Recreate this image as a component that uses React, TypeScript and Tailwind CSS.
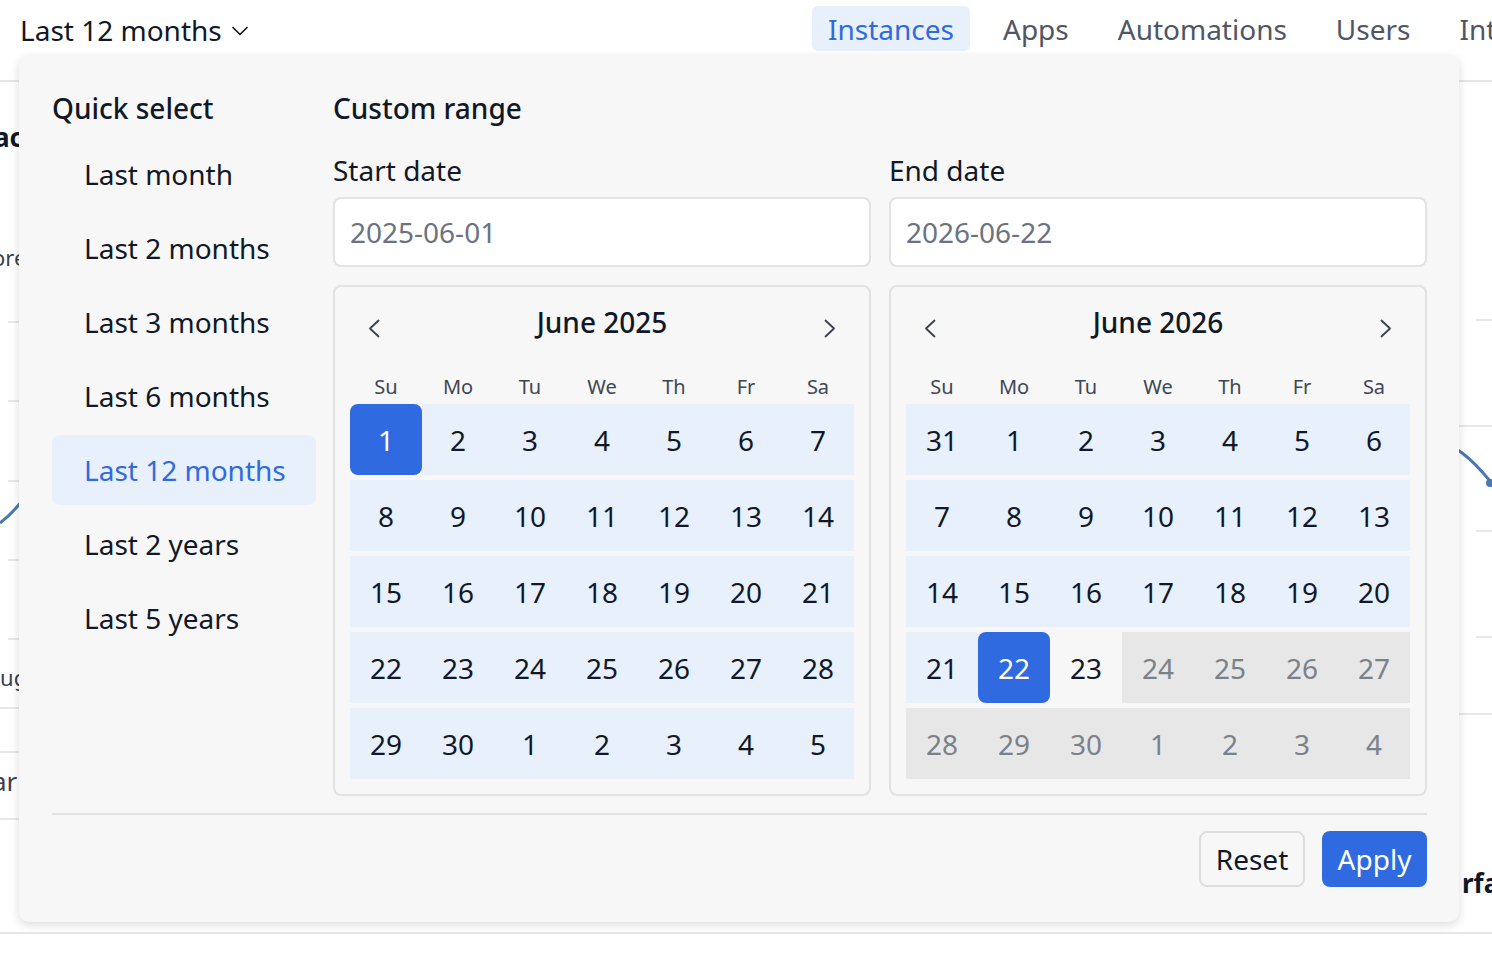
import { ChevronDown } from "lucide-react";

type CellState = "range" | "sel" | "plain" | "off";
type Cell = { d: number; s: CellState };

const cellStyles: Record<CellState, string> = {
  range: "bg-[#e8f0fb] text-[#111827]",
  sel: "bg-[#2f6ae0] text-white rounded-[8px]",
  plain: "text-[#111827]",
  off: "bg-[#e6e7e6] text-[#7b818b]",
};

const weekdays = ["Su", "Mo", "Tu", "We", "Th", "Fr", "Sa"];

const june2025: Cell[] = [
  ...Array.from({ length: 30 }, (_, i) => ({ d: i + 1, s: (i === 0 ? "sel" : "range") as CellState })),
  ...[1, 2, 3, 4, 5].map((d) => ({ d, s: "range" as CellState })),
];

const june2026: Cell[] = [
  { d: 31, s: "range" },
  ...Array.from({ length: 30 }, (_, i) => {
    const d = i + 1;
    let s: CellState = "range";
    if (d === 22) s = "sel";
    else if (d === 23) s = "plain";
    else if (d > 23) s = "off";
    return { d, s };
  }),
  ...[1, 2, 3, 4].map((d) => ({ d, s: "off" as CellState })),
];

const quickItems = [
  "Last month",
  "Last 2 months",
  "Last 3 months",
  "Last 6 months",
  "Last 12 months",
  "Last 2 years",
  "Last 5 years",
];

function Chevron({ dir }: { dir: "left" | "right" }) {
  return (
    <svg width="12" height="19" viewBox="0 0 12 19" fill="none" stroke="#374151" strokeWidth="1.8" strokeLinecap="round" strokeLinejoin="round">
      {dir === "left" ? <path d="M10.5 1.5 2 9.5l8.5 8" /> : <path d="M1.5 1.5 10 9.5l-8.5 8" />}
    </svg>
  );
}

function Calendar({ title, cells }: { title: string; cells: Cell[] }) {
  return (
    <div className="mt-[18px] rounded-[8px] border-2 border-[#e2e2e2] p-[15px]">
      <div className="flex h-[40px] items-center justify-between">
        <button className="mt-[12px] flex w-[48px] justify-center">
          <Chevron dir="left" />
        </button>
        <span className="text-[28px] font-medium leading-[36px] text-[#111827]">{title}</span>
        <button className="mt-[12px] flex w-[48px] justify-center">
          <Chevron dir="right" />
        </button>
      </div>
      <div className="mt-[30px] grid h-[28px] grid-cols-7 items-center text-center text-[20px] text-[#3f4652]">
        {weekdays.map((w) => (
          <span key={w}>{w}</span>
        ))}
      </div>
      <div className="mt-[4px] grid grid-cols-7 gap-y-[5px]">
        {cells.map((c, i) => (
          <div key={i} className={`flex h-[71px] items-center justify-center text-[28px] ${cellStyles[c.s]}`}>
            {c.d}
          </div>
        ))}
      </div>
    </div>
  );
}

function DateColumn({ label, value, title, cells }: { label: string; value: string; title: string; cells: Cell[] }) {
  return (
    <div className="flex flex-col">
      <label className="text-[28px] leading-[36px] text-[#111827]">{label}</label>
      <div className="mt-[9px] flex h-[70px] items-center rounded-[8px] border-2 border-[#e2e2e2] bg-white px-[15px] text-[28px] text-[#6b7280]">
        {value}
      </div>
      <Calendar title={title} cells={cells} />
    </div>
  );
}

export default function App() {
  return (
    <div className="relative h-[962px] w-[1492px] overflow-hidden bg-white font-['Noto_Sans','Open_Sans',sans-serif] text-[#111827]">
      {/* header */}
      <header className="flex h-[82px] items-start overflow-hidden border-b-2 border-[#e6e6e6]">
        <div className="flex w-[812px] shrink-0 items-center pl-[20px] pt-[12px]">
          <span className="whitespace-nowrap text-[28px] leading-[36px]">Last 12 months</span>
          <ChevronDown size={28} strokeWidth={1.5} className="ml-[4px] mt-[2px] text-[#111827]" />
        </div>
        <nav className="mt-[6px] flex shrink-0 gap-[17px] whitespace-nowrap text-[28px] text-[#4f5664]">
          <span className="flex h-[45px] items-center rounded-[6px] bg-[#e8f0fb] px-[16px] text-[#2f6ae0]">Instances</span>
          <span className="flex h-[45px] items-center px-[16px]">Apps</span>
          <span className="flex h-[45px] items-center px-[16px]">Automations</span>
          <span className="flex h-[45px] items-center px-[16px]">Users</span>
          <span className="flex h-[45px] items-center px-[16px]">Integrations</span>
        </nav>
      </header>

      {/* page content behind the dropdown */}
      <div className="flex justify-between">
        <div className="w-[80px] shrink-0">
          <p className="-ml-[6px] mt-[37px] whitespace-nowrap text-[26px] font-bold leading-[36px]">ace</p>
          <p className="-ml-[8px] mt-[87px] whitespace-nowrap text-[22px] leading-[30px] text-[#374151]">ore</p>
          <div className="relative ml-[8px] mt-[49px] flex h-[319px] flex-col justify-between">
            {[0, 1, 2, 3, 4].map((i) => (
              <div key={i} className="border-t-2 border-[#e8e8e8]" />
            ))}
            <svg className="absolute -left-[8px] top-0" width="80" height="319" fill="none">
              <path d="M0 202 C 8 196, 14 190, 22 180 S 50 160, 80 150" stroke="#4a78b0" strokeWidth="3" />
            </svg>
          </div>
          <p className="-ml-[14px] mt-[22px] whitespace-nowrap text-[22px] leading-[30px] text-[#374151]">Aug</p>
          <div className="mt-[15px] border-t-2 border-[#e8e8e8]" />
          <div className="mt-[42px] border-t-2 border-[#e8e8e8]" />
          <p className="-ml-[8px] mt-[11px] whitespace-nowrap text-[26px] leading-[34px] text-[#374151]">ar</p>
          <div className="mt-[20px] border-t-2 border-[#e8e8e8]" />
        </div>
        <div className="w-[60px] shrink-0">
          <div className="relative mt-[237px] flex h-[319px] flex-col justify-between">
            {[0, 1, 2, 3].map((i) => (
              <div key={i} className={i === 1 ? "border-t-2 border-[#e8e8e8]" : "ml-[44px] border-t-2 border-[#e8e8e8]"} />
            ))}
            <svg className="absolute left-0 top-0" width="60" height="319" fill="none">
              <path d="M0 120 C 22 124, 40 140, 58 162" stroke="#4a78b0" strokeWidth="3" />
              <circle cx="58" cy="164" r="4" fill="#4a78b0" />
            </svg>
          </div>
          <div className="mt-[75px] border-t-2 border-[#e8e8e8]" />
          <p className="ml-[30px] mt-[150px] whitespace-nowrap text-[26px] font-bold leading-[36px]">rface</p>
        </div>
      </div>
      <div className="absolute inset-x-0 top-[932px] border-t-2 border-[#e6e6e6]" />

      {/* date range dropdown */}
      <div className="absolute left-[19px] top-[55px] z-10 flex h-[867px] w-[1440px] flex-col rounded-[10px] bg-[#f7f7f7] pl-[33px] pr-[32px] pt-[35px] shadow-[0_3px_10px_rgba(0,0,0,0.14)]">
        <div className="flex gap-[17px]">
          <div className="w-[264px] shrink-0">
            <h3 className="whitespace-nowrap text-[28px] font-medium leading-[36px]">Quick select</h3>
            <div className="mt-[13px] flex flex-col gap-[4px]">
              {quickItems.map((q) => (
                <div
                  key={q}
                  className={
                    q === "Last 12 months"
                      ? "flex h-[70px] items-center whitespace-nowrap rounded-[8px] bg-[#e8f0fb] px-[32px] text-[28px] text-[#2f6ae0]"
                      : "flex h-[70px] items-center whitespace-nowrap rounded-[8px] px-[32px] text-[28px] text-[#111827]"
                  }
                >
                  {q}
                </div>
              ))}
            </div>
          </div>
          <div className="flex-1">
            <h3 className="text-[28px] font-medium leading-[36px]">Custom range</h3>
            <div className="mt-[26px] grid grid-cols-2 gap-[18px]">
              <DateColumn label="Start date" value="2025-06-01" title="June 2025" cells={june2025} />
              <DateColumn label="End date" value="2026-06-22" title="June 2026" cells={june2026} />
            </div>
          </div>
        </div>
        <div className="mt-[17px] border-t-2 border-[#e3e3e3]" />
        <div className="mt-[16px] flex justify-end gap-[17px]">
          <button className="flex h-[56px] w-[106px] items-center justify-center rounded-[8px] border-2 border-[#dedede] text-[28px] text-[#111827]">
            Reset
          </button>
          <button className="flex h-[56px] w-[105px] items-center justify-center rounded-[8px] bg-[#2f6ae0] text-[28px] text-white">
            Apply
          </button>
        </div>
      </div>
    </div>
  );
}
